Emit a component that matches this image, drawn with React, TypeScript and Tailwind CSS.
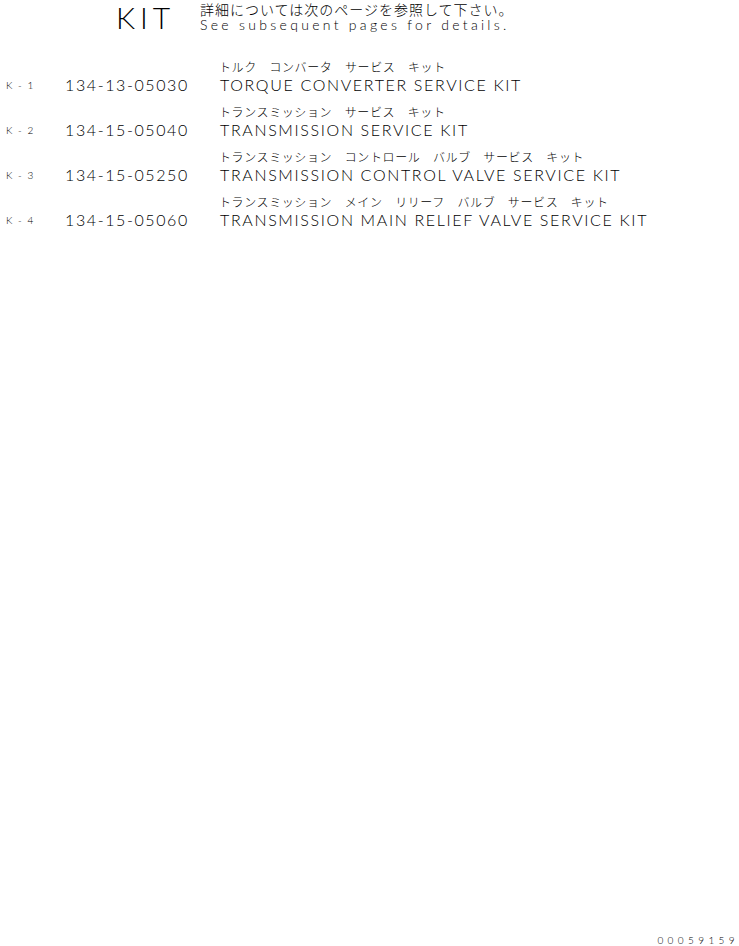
import { memo } from "react";

type Kit = {
    no: string;
    part: string;
    jp: string;
    en: string;
};

const kits: Kit[] = [
    { no: "K - 1", part: "134-13-05030", jp: "トルク　コンバータ　サービス　キット", en: "TORQUE CONVERTER SERVICE KIT" },
    { no: "K - 2", part: "134-15-05040", jp: "トランスミッション　サービス　キット", en: "TRANSMISSION SERVICE KIT" },
    { no: "K - 3", part: "134-15-05250", jp: "トランスミッション　コントロール　バルブ　サービス　キット", en: "TRANSMISSION CONTROL VALVE SERVICE KIT" },
    { no: "K - 4", part: "134-15-05060", jp: "トランスミッション　メイン　リリーフ　バルブ　サービス　キット", en: "TRANSMISSION MAIN RELIEF VALVE SERVICE KIT" },
];

const latin = "font-['Lato','Liberation_Sans',sans-serif] font-light";
const jpFont = "font-['Noto_Sans_CJK_JP',sans-serif] font-light";

const KitRow = ({ kit }: { kit: Kit }) => {
    return (
        <div className="flex flex-col">
            <div className="flex h-[18px] items-center pl-[219px]">
                <span className={`${jpFont} text-[12px] leading-none tracking-[0.6px]`}>{kit.jp}</span>
            </div>
            <div className="flex h-[18px] items-center">
                <span className={`${latin} w-[65px] pl-[6px] text-[10px] leading-none tracking-[1.5px]`}>{kit.no}</span>
                <span className={`${latin} w-[155px] text-[16px] leading-none tracking-[1.6px] tabular-nums`}>{kit.part}</span>
                <span className={`${latin} text-[16px] leading-none tracking-[1.65px]`}>{kit.en}</span>
            </div>
        </div>
    );
};

const App = () => {
    return (
        <div className="flex h-[946px] w-[739px] flex-col justify-between bg-white text-black">
            <div className="flex flex-col">
                <div className="flex items-start pt-[1px]">
                    <div className="flex h-[33px] w-[200px] items-start pl-[116px]">
                        <span className="font-['Lato',sans-serif] text-[30px] font-light leading-[33px] tracking-[5px]">KIT</span>
                    </div>
                    <div className="flex flex-col">
                        <div className={`${jpFont} h-[16px] text-[14px] leading-[16px] tracking-[1px]`}>
                            詳細については次のページを参照して下さい。
                        </div>
                        <div className={`${latin} h-[15px] text-[14px] leading-[15px] tracking-[3.3px]`}>
                            See subsequent pages for details.
                        </div>
                    </div>
                </div>
                <div className="mt-[24px] flex flex-col gap-[9px]">
                    {kits.map((kit) => (
                        <KitRow key={kit.no} kit={kit} />
                    ))}
                </div>
            </div>
            <div className="flex justify-end">
                <span className={`${latin} text-[10px] leading-[12px] tracking-[4.4px] tabular-nums`}>00059159</span>
            </div>
        </div>
    );
};

export default memo(App);
